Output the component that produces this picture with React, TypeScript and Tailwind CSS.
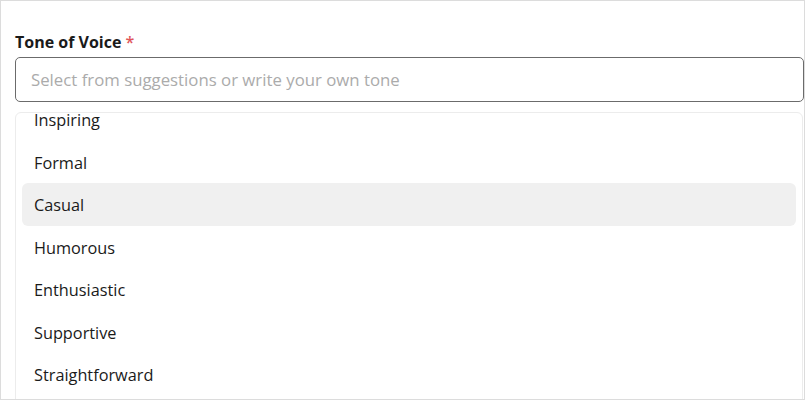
const tones = ['Inspiring', 'Formal', 'Casual', 'Humorous', 'Enthusiastic', 'Supportive', 'Straightforward', 'Professional'];

export default function App() {
  return (
    <div
      className="w-[805px] h-[400px] overflow-hidden border border-[#dcdcdc] bg-white"
      style={{ fontFamily: "'Open Sans', 'Noto Sans', sans-serif" }}
    >
      <div className="pl-[14px] pt-[30px]">
        <label className="block text-[16px] font-bold leading-[22px] text-[#1a1a1a]">
          Tone of Voice <span className="font-semibold text-[#e0555a]">*</span>
        </label>
        <div className="mt-[4px] h-[45px] flex items-center rounded-[5px] border-[1.5px] border-[#6b6b6b] pl-[15px]">
          <span className="text-[16.8px] text-[#ababab]">Select from suggestions or write your own tone</span>
        </div>
        <div className="mt-[10px] mr-[1px] h-[300px] overflow-hidden rounded-t-[6px] border border-[#ececec] px-[6px]">
          <ul className="-mt-[15px]">
            {tones.map((t) => (
              <li
                key={t}
                className={`h-[42.5px] flex items-center rounded-[6px] pl-[12px] pt-[2px] text-[16.3px] text-[#1a1a1a] ${
                  t === 'Casual' ? 'bg-[#f0f0f0]' : ''
                }`}
              >
                {t}
              </li>
            ))}
          </ul>
        </div>
      </div>
    </div>
  );
}
